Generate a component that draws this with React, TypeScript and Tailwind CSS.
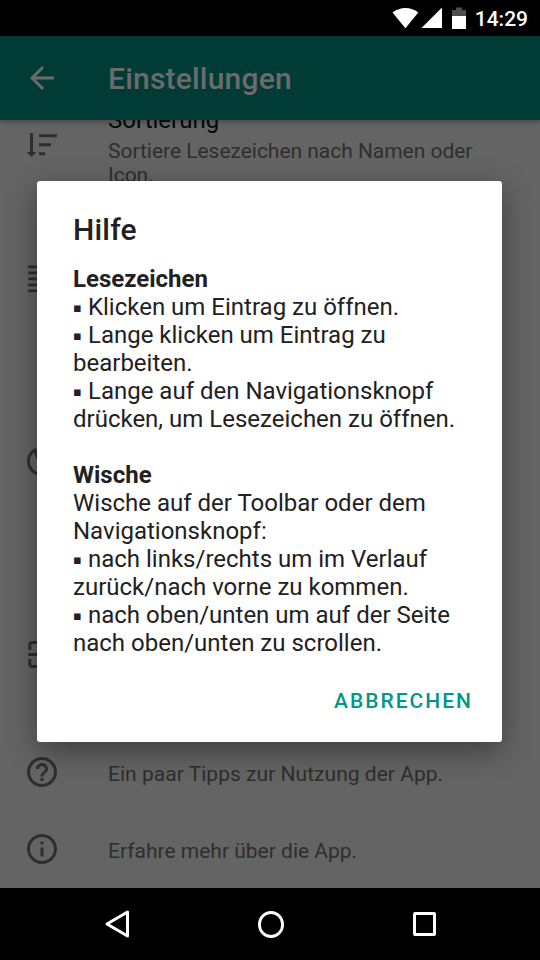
import type { ReactNode } from 'react';

function RowIcon({ children }: { children: ReactNode }) {
  return (
    <svg viewBox="0 0 24 24" className="size-9 shrink-0 fill-[#2e2e2e]">
      {children}
    </svg>
  );
}

function StatusBar() {
  return (
    <div className="flex h-9 shrink-0 items-center justify-end bg-black pr-3 text-white">
      <svg viewBox="0 0 76 24" className="mr-2 h-6 w-[76px]">
        <path d="M1.500 6.500C9 .4 20 .4 27.300 6.500L14.400 22.200Z" fill="#fff" />
        <path d="M51 1.500V22H30.500Z" fill="#fff" />
        <path d="M61 4H65V1.500H71V4H75V10H61Z" fill="#4d4d4d" />
        <path d="M61 10H75V23H61Z" fill="#fff" />
      </svg>
      <span className="pt-px text-[21px] leading-9 font-medium">14:29</span>
    </div>
  );
}

function Toolbar() {
  return (
    <header className="z-10 flex h-[84px] shrink-0 items-center bg-[#003c35] pl-6 shadow-[0_2px_5px_rgba(0,0,0,0.3)]">
      <svg viewBox="0 0 24 24" className="size-9 fill-[#6b6b6b]">
        <path d="M20 11H7.830l5.590-5.590L12 4l-8 8 8 8 1.410-1.410L7.830 13H20v-2z" />
      </svg>
      <h1 className="mt-[2px] ml-12 text-[30px] leading-9 font-medium tracking-[0.200px] text-[#6b6b6b]">
        Einstellungen
      </h1>
    </header>
  );
}

function Settings() {
  return (
    <main className="flex h-[768px] shrink-0 flex-col overflow-hidden bg-[#646464] pl-6 text-[21px] leading-6 text-[#2e2e2e]">
      <section className="flex h-[140px] gap-12 pt-[7px]">
        <RowIcon>
          <path d="M4 4h2V16.700h2.200L5 20 1.800 16.700H4zM10 4.800h12v2H10zM10 10.800h8v2h-8zM10 16.800h4v2h-4z" />
        </RowIcon>
        <div className="-mt-[23px] w-[400px]">
          <h2 className="text-2xl leading-8 text-[#080808]">Sortierung</h2>
          <p className="mt-[3px] tracking-[-0.030px] whitespace-nowrap">
            Sortiere Lesezeichen nach Namen oder
            <br />
            Icon.
          </p>
        </div>
      </section>
      <section className="h-[184px]">
        <RowIcon>
          <path d="M2.800 3.700h18.500v1.800H2.800zM2.800 7.700h18.500v1.800H2.800zM2.800 11.700h18.500v1.800H2.800zM2.800 15.700h18.500v1.800H2.800zM2.800 19.700h18.500v1.800H2.800z" />
        </RowIcon>
      </section>
      <section className="h-[193px]">
        <RowIcon>
          <path
            d="M7.300 4C4.600 5.500 3 8.400 3 11.600A9 9 0 0 0 12 20.400a9 9 0 0 0 8-5C14.500 16.500 9 12 7.300 4Z"
            fill="none"
            stroke="#2e2e2e"
            strokeWidth="2"
          />
        </RowIcon>
      </section>
      <section className="h-[117px]">
        <RowIcon>
          <path
            d="M3.870 8.700V5.200Q3.870 3.670 5.400 3.670H18.600Q20.130 3.670 20.130 5.200V8.700M3.870 14.700V18.200Q3.870 19.700 5.400 19.700H18.600Q20.130 19.700 20.130 18.200V14.700M2.870 11.700H21.130"
            fill="none"
            stroke="#2e2e2e"
            strokeWidth="2"
          />
        </RowIcon>
      </section>
      <section className="flex h-[77px] items-start gap-12">
        <RowIcon>
          <path d="M11 18h2v-2h-2v2zm1-16C6.480 2 2 6.480 2 12s4.480 10 10 10 10-4.480 10-10S17.520 2 12 2zm0 18c-4.410 0-8-3.590-8-8s3.590-8 8-8 8 3.590 8 8-3.590 8-8 8zm0-14c-2.210 0-4 1.790-4 4h2c0-1.100.9-2 2-2s2 .9 2 2c0 2-3 1.750-3 5h2c0-2.250 3-2.500 3-5 0-2.210-1.790-4-4-4z" />
        </RowIcon>
        <p className="mt-2 tracking-[0.030px]">Ein paar Tipps zur Nutzung der App.</p>
      </section>
      <section className="flex items-start gap-12">
        <RowIcon>
          <path d="M11 7h2v2h-2zm0 4h2v6h-2zm1-9C6.480 2 2 6.480 2 12s4.480 10 10 10 10-4.480 10-10S17.520 2 12 2zm0 18c-4.410 0-8-3.590-8-8s3.590-8 8-8 8 3.590 8 8-3.590 8-8 8z" />
        </RowIcon>
        <p className="mt-2">Erfahre mehr über die App.</p>
      </section>
    </main>
  );
}

function Bullet() {
  return (
    <span className="inline-block w-[9px] align-[3px] font-['DejaVu_Sans',sans-serif] text-[13px] leading-none">▪</span>
  );
}

function HelpDialog() {
  return (
    <div
      role="dialog"
      className="absolute top-[181px] left-[37px] flex h-[561px] w-[465px] flex-col rounded-[3px] bg-white pt-[31px] pl-9 text-[#212121] shadow-[0_9px_30px_rgba(0,0,0,0.38)]"
    >
      <h2 className="text-[30px] leading-9 font-medium tracking-[0.200px]">Hilfe</h2>
      <div className="mt-[17px] text-2xl leading-7 whitespace-nowrap">
        <p className="font-bold">Lesezeichen</p>
        <p><Bullet /> Klicken um Eintrag zu öffnen.</p>
        <p><Bullet /> Lange klicken um Eintrag zu<br />bearbeiten.</p>
        <p><Bullet /> Lange auf den Navigationsknopf<br />drücken, um Lesezeichen zu öffnen.</p>
        <p className="mt-7 font-bold">Wische</p>
        <p>Wische auf der Toolbar oder dem<br />Navigationsknopf:</p>
        <p><Bullet /> nach links/rechts um im Verlauf<br />zurück/nach vorne zu kommen.</p>
        <p><Bullet /> nach oben/unten um auf der Seite<br />nach oben/unten zu scrollen.</p>
      </div>
      <button className="mt-[28px] mr-[29px] self-end text-[21px] leading-8 font-medium tracking-[2px] text-[#009688]">
        ABBRECHEN
      </button>
    </div>
  );
}

function NavigationBar() {
  return (
    <nav className="flex h-[72px] items-center justify-between bg-black pr-[102px] pl-[103px]">
      <svg viewBox="0 0 28 32" className="h-8 w-7 fill-none stroke-white stroke-[3]">
        <path d="M24.500 4V28L4 16Z" strokeLinejoin="round" />
      </svg>
      <svg viewBox="0 0 28 30" className="mr-[2px] h-[30px] w-7 fill-none stroke-white stroke-[2.800]">
        <ellipse cx="14" cy="15.500" rx="11.600" ry="12" />
      </svg>
      <svg viewBox="0 0 26 28" className="h-7 w-[26px] fill-none stroke-white stroke-[3]">
        <rect x="2.500" y="3.500" width="20" height="21" rx="0.500" />
      </svg>
    </nav>
  );
}

export default function App() {
  return (
    <div className="relative flex h-[960px] w-[540px] flex-col overflow-hidden bg-black font-['Roboto','Noto_Sans',sans-serif]">
      <StatusBar />
      <Toolbar />
      <Settings />
      <NavigationBar />
      <HelpDialog />
    </div>
  );
}
